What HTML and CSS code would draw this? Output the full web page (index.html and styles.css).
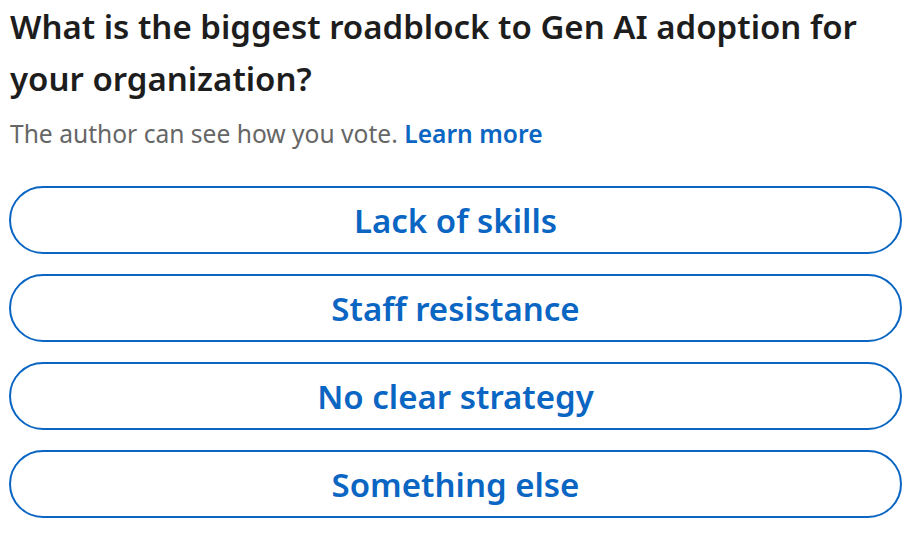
FILE: index.html
```html
<!DOCTYPE html>
<html lang="en">
<head>
    <meta charset="UTF-8">
    <meta name="viewport" content="width=device-width, initial-scale=1.0">
    <title>Poll</title>
    <link rel="stylesheet" href="styles.css">
</head>
<body>

    <div class="poll">
        <h2 class="question">What is the biggest roadblock to Gen AI adoption for your organization?</h2>
        <p class="note">The author can see how you vote. <a href="#" class="learn">Learn more</a></p>

        <!--poll options-->
        <div class="options">
            <button class="option">Lack of skills</button>
            <button class="option">Staff resistance</button>
            <button class="option">No clear strategy</button>
            <button class="option">Something else</button>
        </div>
    </div>

</body>
</html>
```

FILE: styles.css
```css
body { margin: 0; font-family: "Noto Sans", "Open Sans", Arial, sans-serif; background: #fff; }
.poll { padding: 1px 17px 0 9px; }
.question { font-size: 33px; font-weight: 600; line-height: 52px; color: #1d1d1d; margin: 0 0 0 1px; }
.note { font-size: 24.6px; color: #666666; margin: 13px 0 36px 1px; line-height: 32px; }
.learn { color: #0a66c2; font-weight: 600; text-decoration: none; }
.options { display: flex; flex-direction: column; gap: 20px; }
.option { height: 68px; border: 2px solid #0a66c2; border-radius: 34px; background: #fff; color: #0a66c2; font-family: inherit; font-size: 33px; font-weight: 600; cursor: pointer; padding: 0; }
```
